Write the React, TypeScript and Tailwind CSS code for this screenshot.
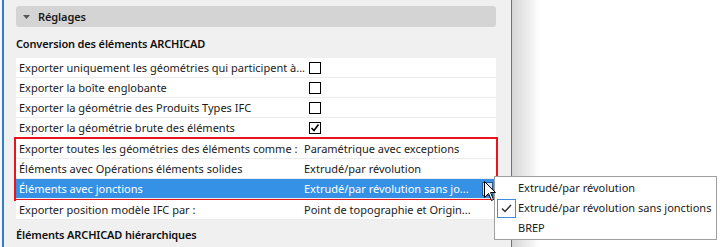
import { useState } from 'react';

type Row = {
  label: string;
  value?: string;
  checkbox?: boolean;
  checked?: boolean;
};

const rows: Row[] = [
  { label: 'Exporter uniquement les géométries qui participent à...', checkbox: true },
  { label: 'Exporter la boîte englobante', checkbox: true },
  { label: 'Exporter la géométrie des Produits Types IFC', checkbox: true },
  { label: 'Exporter la géométrie brute des éléments', checkbox: true, checked: true },
];

const boxed: Row[] = [
  { label: 'Exporter toutes les géométries des éléments comme :', value: 'Paramétrique avec exceptions' },
  { label: 'Éléments avec Opérations éléments solides', value: 'Extrudé/par révolution' },
  { label: 'Éléments avec jonctions', value: 'Extrudé/par révolution sans jo...' },
];

const menuItems = ['Extrudé/par révolution', 'Extrudé/par révolution sans jonctions', 'BREP'];

function Checkbox({ checked }: { checked?: boolean }) {
  return (
    <div className="w-[12px] h-[12px] border border-black bg-white flex items-center justify-center">
      {checked && (
        <svg width="10" height="10" viewBox="0 0 10 10">
          <path d="M1.5 5 L4 7.5 L8.5 1.5" fill="none" stroke="black" strokeWidth="1.6" />
        </svg>
      )}
    </div>
  );
}

function TableRow({ row, selected }: { row: Row; selected?: boolean }) {
  return (
    <div
      className={`flex items-center h-[20px] border-b border-[#ececec] ${selected ? 'bg-[#3591e5] text-white' : 'bg-white text-[#1a1a1a]'}`}
    >
      <div className="w-[288px] pl-[3px] whitespace-nowrap">{row.label}</div>
      <div className="flex-1 flex items-center whitespace-nowrap">
        {row.checkbox ? (
          <div className="pl-[5px]">
            <Checkbox checked={row.checked} />
          </div>
        ) : (
          <span>{row.value}</span>
        )}
        {selected && (
          <div className="ml-auto mr-[3px] w-[11px] h-[14px] bg-[#cfe5f8] border border-[#27588c] flex items-center justify-center">
            <svg width="5" height="7" viewBox="0 0 5 7">
              <path d="M0 0 L5 3.5 L0 7 Z" fill="#1c3550" />
            </svg>
          </div>
        )}
      </div>
    </div>
  );
}

export default function App() {
  const [open] = useState(true);

  return (
    <div
      className="relative w-[720px] h-[247px] overflow-hidden flex bg-white text-[11px] leading-[16px]"
      style={{ fontFamily: '"Noto Sans", "Open Sans", sans-serif' }}
    >
      <div className="w-[2px] bg-[#f7f7f7]" />
      <div className="w-[2px] bg-[#2f7fd0]" />
      <div className="w-[507px] bg-[#f0f0f0] pl-[12px] pr-[15px] pt-[6px]">
        <div className="h-[21px] bg-[#d4d4d4] rounded-[3px] flex items-center pl-[7px] gap-[8px]">
          <svg width="7" height="4" viewBox="0 0 7 4">
            <path d="M0 0 L7 0 L3.5 4 Z" fill="#555" />
          </svg>
          <span className="font-semibold text-[#1a1a1a] tracking-[-0.1px]">Réglages</span>
        </div>
        <div className="font-semibold text-[#111] h-[31px] flex items-center pt-[3px] tracking-[-0.15px]">
          Conversion des éléments ARCHICAD
        </div>
        <div>
          {rows.map((r) => (
            <TableRow key={r.label} row={r} />
          ))}
          <div className="border-2 border-[#e8141c] -mx-[2px] -my-[1px]">
            {boxed.map((r, i) => (
              <TableRow key={r.label} row={r} selected={i === 2} />
            ))}
          </div>
          <TableRow row={{ label: 'Exporter position modèle IFC par :', value: 'Point de topographie et Origin...' }} />
        </div>
        <div className="font-semibold text-[#111] h-[30px] flex items-center tracking-[-0.15px]">
          Éléments ARCHICAD hiérarchiques
        </div>
      </div>
      <div className="w-[1px] bg-[#2f7fd0]" />
      <div className="w-[28px] bg-gradient-to-r from-[#d6d6d6] to-white" />
      <div className="flex-1 bg-white" />

      {open && (
        <div className="absolute left-[494px] top-[176px] w-[223px] h-[64px] bg-white border border-[#a0a0a0] py-[1px] text-[#1a1a1a]">
          {menuItems.map((m, i) => (
            <div key={m} className="h-[20px] flex items-center">
              <div className="w-[23px] h-[20px] flex items-center justify-center">
                {i === 1 && (
                  <div className="w-[19px] h-[19px] border border-[#3b8fe0] flex items-center justify-center">
                    <svg width="11" height="9" viewBox="0 0 11 9">
                      <path d="M1 4.5 L4 7.5 L10 1" fill="none" stroke="#333" strokeWidth="1.5" />
                    </svg>
                  </div>
                )}
              </div>
              <span className="whitespace-nowrap">{m}</span>
            </div>
          ))}
        </div>
      )}

      <svg className="absolute left-[484px] top-[181px]" width="13" height="21" viewBox="0 0 13 21">
        <path
          d="M0.5 0.5 L0.5 16.5 L4.5 12.5 L7.5 19.5 L9.5 18.5 L6.5 11.5 L11.5 11.5 Z"
          fill="white"
          stroke="black"
          strokeWidth="1"
          strokeLinejoin="round"
        />
      </svg>
    </div>
  );
}
